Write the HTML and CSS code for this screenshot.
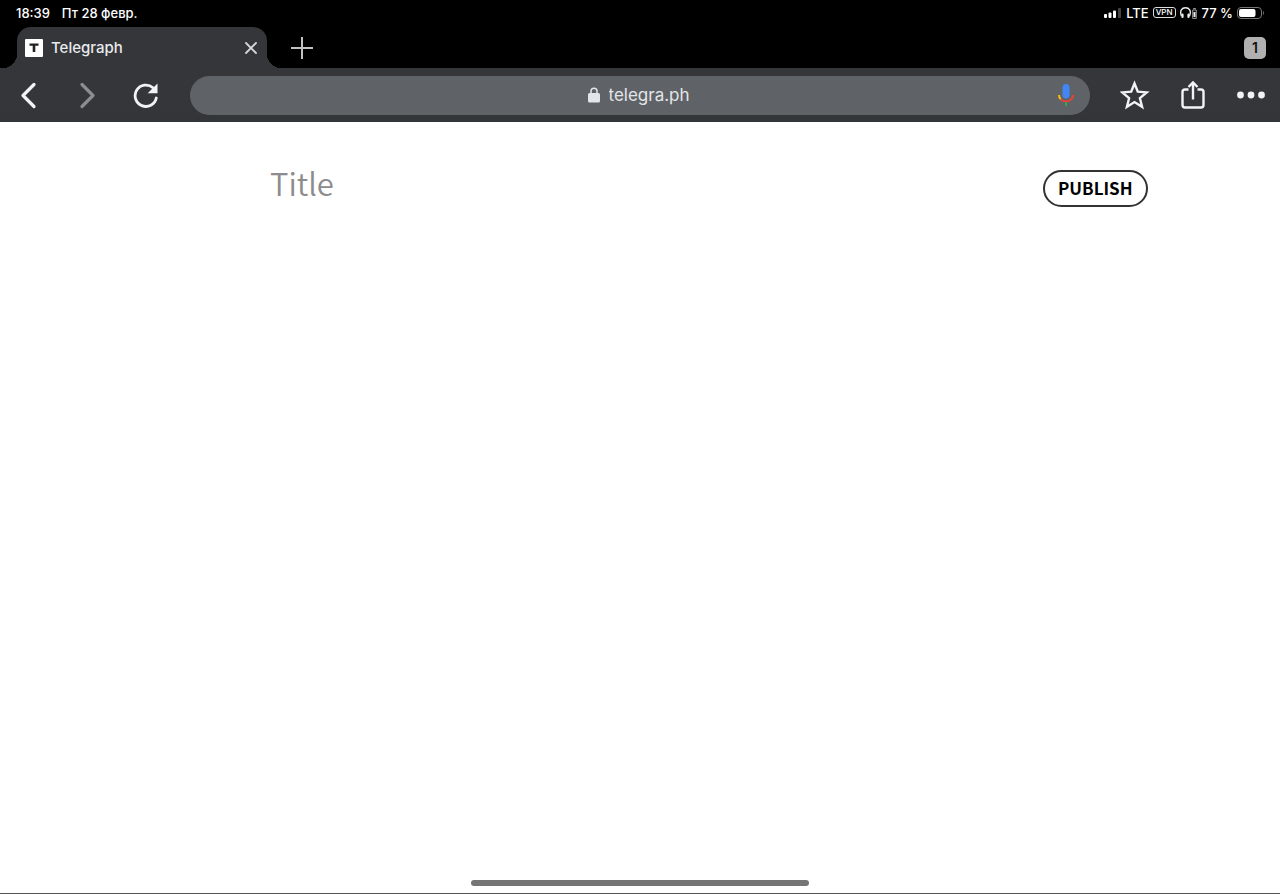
FILE: index.html
```html
<!DOCTYPE html>
<html lang="en">
<head>
    <meta charset="UTF-8" />
    <meta name="viewport" content="width=device-width, initial-scale=1.0" />
    <title>Telegraph</title>
    <link rel="stylesheet" href="styles.css">
</head>
<body>
    <header class="browser">
        <div class="status-bar">
            <div class="status-left">
                <span>18:39</span>
                <span lang="ru">Пт 28 февр.</span>
            </div>
            <div class="status-right">
                <svg class="signal" width="18" height="10" viewBox="0 0 18 10" fill="#fff">
                    <rect x="0" y="6" width="3" height="4" rx="1" />
                    <rect x="4.500" y="4.500" width="3" height="5.500" rx="1" />
                    <rect x="9" y="2.500" width="3" height="7.500" rx="1" />
                    <rect x="14" y="0" width="3" height="10" rx="1" fill="#444" />
                </svg>
                <span>LTE</span>
                <span class="vpn">VPN</span>
                <svg width="18" height="12" viewBox="0 0 18 12" fill="none" stroke="#eee">
                    <path d="M1.500 9C-.8 3.500 2 .8 5.500.8S11.800 3.500 9.500 9" stroke-width="1.400" />
                    <path d="M2.500 7.500v2.500M8.500 7.500v2.500" stroke-width="2.200" stroke-linecap="round" />
                    <path d="M13.500 2.500V1.500h2v1M12.700 3h3.600v8.400h-3.600z" stroke="#999" />
                    <path d="M14.500 5v5" stroke-width="2" />
                </svg>
                <span>77 %</span>
                <svg width="27" height="12" viewBox="0 0 27 12">
                    <rect x=".5" y=".5" width="24" height="11" rx="3.500" fill="none" stroke="#777" />
                    <rect x="2" y="2" width="16.500" height="8" rx="2" fill="#fff" />
                    <path d="M26 4c1.300.8 1.300 3.200 0 4z" fill="#777" />
                </svg>
            </div>
        </div>

        <div class="tab-bar">
            <div class="tab">
                <svg width="18" height="18" viewBox="0 0 18 18">
                    <rect width="18" height="18" rx="1" fill="#fff" />
                    <path d="M4.500 4.500h9v2.300h-3.200V13H7.700V6.800H4.500z" fill="#222" />
                </svg>
                <span class="tab-title">Telegraph</span>
                <button class="tab-close" aria-label="Close tab">
                    <svg width="12" height="12" viewBox="0 0 12 12" stroke="#d6d7d9" stroke-width="1.800" stroke-linecap="round">
                        <path d="M1 1l10 10M11 1L1 11" />
                    </svg>
                </button>
            </div>
            <button class="new-tab" aria-label="New tab">
                <svg width="22" height="22" viewBox="0 0 22 22" stroke="#c2c2c2" stroke-width="2">
                    <path d="M0 11h22M11 0v22" />
                </svg>
            </button>
            <button class="tab-count">1</button>
        </div>

        <nav class="toolbar">
            <button class="tool" aria-label="Back">
                <svg width="28" height="28" viewBox="0 0 28 28" fill="none" stroke="#f1f3f4" stroke-width="3.200" stroke-linecap="round" stroke-linejoin="round">
                    <path d="M19 3.500L8 14.500l11 11" />
                </svg>
            </button>
            <button class="tool" aria-label="Forward">
                <svg width="28" height="28" viewBox="0 0 28 28" fill="none" stroke="#8b8d90" stroke-width="3.200" stroke-linecap="round" stroke-linejoin="round">
                    <path d="M9 3.500l11 11-11 11" />
                </svg>
            </button>
            <button class="tool" aria-label="Reload">
                <svg width="28" height="28" viewBox="0 0 28 28" fill="none">
                    <path d="M25.300 17A10.700 10.700 0 1 1 22 6.800" stroke="#f1f3f4" stroke-width="2.800" stroke-linecap="round" />
                    <path d="M26.500 2.500v9.800h-9.800z" fill="#f1f3f4" />
                </svg>
            </button>
            <div class="address-bar">
                <label class="address">
                    <svg width="12" height="16" viewBox="0 0 12 16">
                        <path d="M3 7V4.300a3 3 0 0 1 6 0V7" fill="none" stroke="#e3e6e9" stroke-width="1.500" />
                        <rect y="6" width="12" height="9.500" rx="1.500" fill="#e3e6e9" />
                    </svg>
                    <input class="address-input" type="text" value="telegra.ph" aria-label="Address">
                </label>
                <button class="mic" aria-label="Voice search">
                    <svg width="16" height="22" viewBox="0 0 16 22" fill="none" stroke-width="2">
                        <rect x="4.500" y="0" width="7" height="14.500" rx="3.500" fill="#4285f4" />
                        <path d="M1 11c0 1.800.6 3.200 1.800 4.400" stroke="#fbbc04" />
                        <path d="M2.800 15.400c3 2.900 7.400 2.900 10.400 0C14.400 14.200 15 12.800 15 11" stroke="#ea4335" />
                        <path d="M8 18v4" stroke="#34a853" />
                    </svg>
                </button>
            </div>
            <button class="tool" aria-label="Bookmark">
                <svg width="30" height="30" viewBox="0 0 30 30" fill="none" stroke="#f1f3f4" stroke-width="2.400">
                    <path d="M14.500 3.500l3.300 8.200 8.900.7-6.800 5.800 2.200 8.600-7.600-4.700-7.600 4.700 2.200-8.600-6.800-5.800 8.900-.7z" />
                </svg>
            </button>
            <button class="tool" aria-label="Share">
                <svg width="30" height="30" viewBox="0 0 30 30" fill="none" stroke="#f1f3f4" stroke-width="2.400">
                    <path d="M10.500 9.500H7A2.500 2.500 0 0 0 4.500 12v13A2.500 2.500 0 0 0 7 27.500h16a2.500 2.500 0 0 0 2.500-2.500V12A2.500 2.500 0 0 0 23 9.500h-3.500" />
                    <path d="M15 19.500v-17M10.500 7L15 2.500 19.500 7" />
                </svg>
            </button>
            <button class="tool" aria-label="More">
                <svg width="28" height="8" viewBox="0 0 28 8" fill="#f1f3f4">
                    <circle cx="3.500" cy="4" r="3.400" />
                    <circle cx="14" cy="4" r="3.400" />
                    <circle cx="24.500" cy="4" r="3.400" />
                </svg>
            </button>
        </nav>
    </header>

    <main class="page">
        <input class="title-input" type="text" placeholder="Title" aria-label="Title">
        <button class="publish-button">Publish</button>
    </main>

    <footer class="home">
        <div class="home-indicator"></div>
    </footer>
</body>
</html>
```

FILE: styles.css
```css
:root {
    --bar-bg: #35363a;
    --ui-font: Inter, Roboto, sans-serif;
    --page-font: "Noto Sans CJK SC", "Open Sans", sans-serif;
}

* {
    margin: 0;
    padding: 0;
    box-sizing: border-box;
}

body {
    display: flex;
    flex-direction: column;
    min-height: 100vh;
    background: #fff;
    font-family: var(--ui-font);
}

button,
input {
    border: none;
    background: transparent;
    font-family: inherit;
    outline: none;
}

button {
    display: flex;
    align-items: center;
    justify-content: center;
    cursor: pointer;
}

svg {
    display: block;
    flex-shrink: 0;
}

.browser {
    background: #000;
    color: #fff;
}

/* status bar */
.status-bar {
    display: flex;
    justify-content: space-between;
    align-items: center;
    height: 27px;
    padding: 0 16px 2px;
    font-size: 13px;
    font-weight: 500;
    line-height: 16px;
}

.status-left {
    display: flex;
    gap: 12px;
}

.status-right {
    display: flex;
    align-items: center;
    gap: 4px;
}

.vpn {
    padding: 0 2px;
    border: 1px solid #ddd;
    border-radius: 3px;
    font-size: 8px;
    line-height: 9px;
}

/* tabs */
.tab-bar {
    display: flex;
    align-items: center;
    height: 41px;
    padding: 0 14px 0 17px;
}

.tab {
    position: relative;
    display: flex;
    align-items: center;
    gap: 8px;
    width: 250px;
    height: 100%;
    padding: 0 8px;
    background: var(--bar-bg);
    border-radius: 14px 14px 0 0;
}

.tab::before,
.tab::after {
    content: "";
    position: absolute;
    bottom: 0;
    width: 14px;
    height: 14px;
}

.tab::before {
    right: 100%;
    background: radial-gradient(circle at 0 0, #000 14px, var(--bar-bg) 14px);
}

.tab::after {
    left: 100%;
    background: radial-gradient(circle at 100% 0, #000 14px, var(--bar-bg) 14px);
}

.tab-title {
    flex: 1;
    color: #e8eaed;
    font-size: 15px;
    font-weight: 500;
}

.tab-close {
    width: 16px;
    height: 16px;
}

.new-tab {
    width: 40px;
    height: 40px;
    margin-left: 15px;
}

.tab-count {
    width: 22px;
    height: 22px;
    margin-left: auto;
    border-radius: 5px;
    background: #b0b0b0;
    color: #111;
    font-size: 14px;
    font-weight: 600;
}

/* toolbar */
.toolbar {
    display: flex;
    align-items: center;
    height: 54px;
    background: linear-gradient(var(--bar-bg), #333639);
}

.tool {
    flex-shrink: 0;
    width: 58px;
    height: 54px;
}

.address-bar {
    flex: 1;
    display: grid;
    grid-template-columns: 1fr auto 1fr;
    align-items: center;
    height: 39px;
    margin: 0 16px;
    padding: 0 16px;
    border-radius: 20px;
    background: #5f6367;
}

.address {
    grid-column: 2;
    display: flex;
    align-items: center;
    gap: 9px;
}

.address-input {
    width: 84px;
    color: #e3e6e9;
    font-size: 17px;
    line-height: 24px;
}

.mic {
    justify-self: end;
}

/* editor */
.page {
    flex: 1;
    display: grid;
    grid-template-columns: 1fr minmax(0, 740px) 1fr;
    align-items: start;
    padding-top: 36px;
    font-family: var(--page-font);
}

.title-input {
    grid-column: 2;
    width: 100%;
    height: 48px;
    color: #333;
    font-size: 31px;
    font-weight: 350;
}

.title-input::placeholder {
    color: #8c8c8c;
    opacity: 1;
}

.publish-button {
    justify-self: start;
    height: 37px;
    margin: 12px 0 0 33px;
    padding: 0 13px 2px;
    border: 2px solid #333;
    border-radius: 20px;
    color: #000;
    font-size: 17px;
    font-weight: 700;
    text-transform: uppercase;
}

/* home indicator */
.home {
    display: flex;
    justify-content: center;
    padding-bottom: 7px;
    border-bottom: 1px solid #555;
}

.home-indicator {
    width: 338px;
    height: 6px;
    border-radius: 3px;
    background: #757575;
}
```
